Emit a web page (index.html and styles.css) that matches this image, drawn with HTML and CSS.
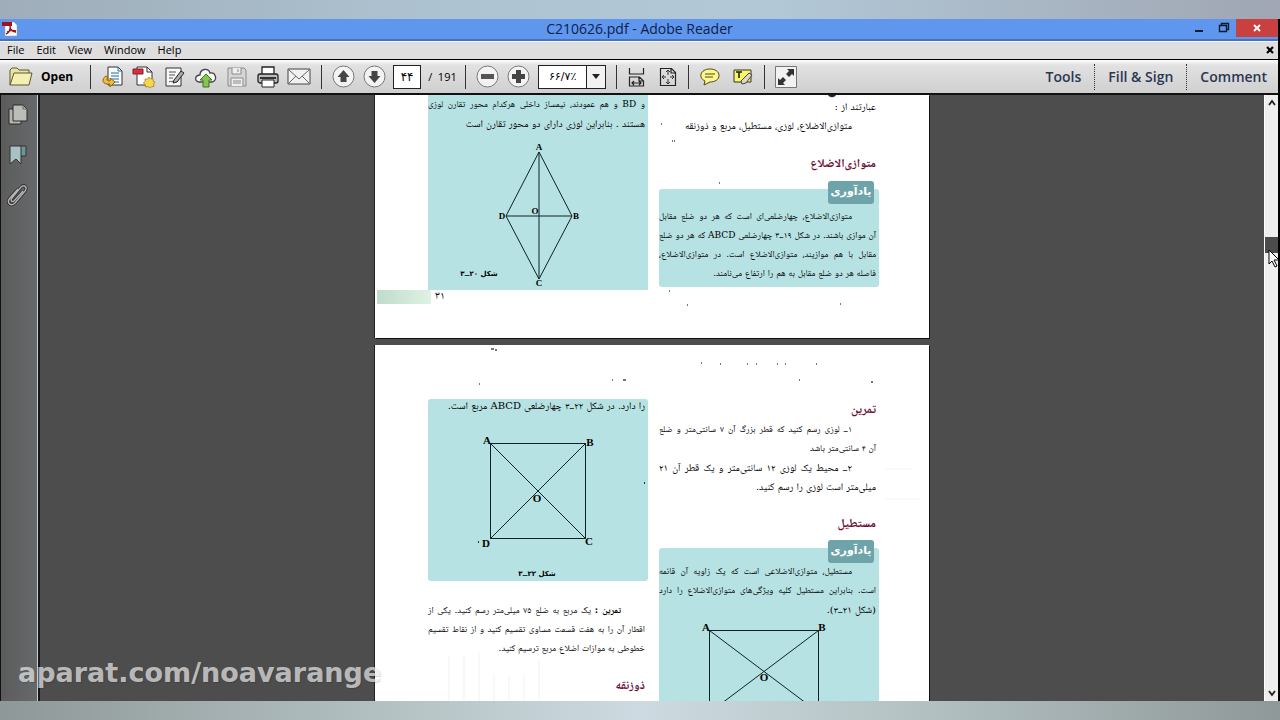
FILE: index.html
```
<!DOCTYPE html>
<html lang="en">
<head>
<meta charset="utf-8">
<title>C210626.pdf - Adobe Reader</title>
<link rel="stylesheet" href="styles.css">
</head>
<body>
<div class="band band-top"></div>
<div class="window">
  <header class="titlebar">
    <svg class="app-icon" width="16" height="16" viewBox="0 0 16 16"><path d="M3 1h9l3 3v11H3z" fill="#fff" stroke="#999" stroke-width=".5"/><path d="M0 1h10v4H0z" fill="#a3131b"/><path d="M8 4c1 4-1 8-4 9M8 5c0 4 3 6 6 6M5 11c3-2 6-2 9-1" fill="none" stroke="#9c1018" stroke-width="1.4"/></svg>
    <h1 class="title">C210626.pdf - Adobe Reader</h1>
    <div class="controls">
      <button class="ctl" aria-label="Minimize"><svg width="10" height="12"><path d="M1 8h8v2H1z" fill="#0c1a30"/></svg></button>
      <button class="ctl" aria-label="Restore"><svg width="12" height="12"><path d="M3.500 3V1.500h7v6H9M1.500 3.500h7v6h-7z" fill="none" stroke="#0c1a30" stroke-width="1.400"/></svg></button>
      <button class="ctl close" aria-label="Close"><svg width="10" height="10"><path d="M2 2l6 6M8 2L2 8" stroke="#fff" stroke-width="1.800"/></svg></button>
    </div>
  </header>
  <nav class="menubar">
    <button>File</button><button>Edit</button><button>View</button><button>Window</button><button>Help</button>
    <button class="doc-close" aria-label="Close document"><svg width="8" height="8"><path d="M1 1l6 6M7 1L1 7" stroke="#000" stroke-width="2.200"/></svg></button>
  </nav>
  <div class="toolbar">
    <button class="open"><svg width="24" height="22" viewBox="0 0 24 22"><path d="M1 19V4l2-2h5l2 2h10v3" fill="#e9e4a4" stroke="#5c5830"/><path d="M1 19L5 7h18l-3 12z" fill="#f4efb2" stroke="#5c5830"/></svg><span>Open</span></button>
    <i class="sep"></i>
    <div class="group files">
      <button aria-label="Export"><svg width="24" height="24"><path d="M7 2h10l4 4v14H7z" fill="#f8fbff" stroke="#333"/><path d="M17 2v4h4M10 8h8M10 11h8M10 14h8M12 17h6" fill="none" stroke="#2b6b9c"/><path d="M5 11c-5 3-4 9 4 8v3l5-5-5-4v3c-3 0-4-2-2-4z" fill="#f3bd35" stroke="#8a6414"/></svg></button>
      <button aria-label="Create PDF"><svg width="24" height="24"><path d="M5 2h10l5 5v13H5z" fill="#fff" stroke="#333"/><path d="M15 2v5h5" fill="none" stroke="#333"/><path d="M1 4h10v5H1z" fill="#d92f3f" stroke="#8c1a26"/><path d="M17 12l1.500 2 2.500-.5v2.500l2 1-1.500 2 .5 2.500-2.500.2L18 23l-2-1.500-2.500.5-.2-2.500-2-1.500 1.800-1.700L13 14l2.500.2z" fill="#f7d64b" stroke="#9c7a14" stroke-width=".7"/></svg></button>
      <button aria-label="Edit"><svg width="24" height="24"><path d="M3 3h15v18H3z" fill="#f8f8f8" stroke="#333"/><path d="M6 7h7M6 10h6M6 13h4M6 17c2-2 2 1 4-1" fill="none" stroke="#555"/><path d="M11 15L18 6l3 2-7 9-4 1z" fill="#aaa" stroke="#222"/></svg></button>
      <button aria-label="Upload"><svg width="24" height="24"><path d="M5 17c-5-1-4-7 1-7 0-6 8-8 10-2 6-1 8 8 2 9z" fill="#f8f8f8" stroke="#444" stroke-width="1.300"/><path d="M12 9l6 6h-3v7H9v-7H6z" fill="#87c653" stroke="#3f7520"/></svg></button>
      <button aria-label="Save"><svg width="24" height="24"><path d="M3 3h16l2 2v16H3z" fill="#d5d5d5" stroke="#8b8b8b"/><path d="M7 3v6h9V3M6 21v-8h12v8M8 16h8M8 18h8M13 4v3" fill="#eee" stroke="#8b8b8b"/></svg></button>
      <button aria-label="Print"><svg width="24" height="24"><path d="M6 10V2h12v8" fill="#fff" stroke="#222" stroke-width="1.300"/><rect x="2" y="9" width="20" height="9" rx="2" fill="#bbb" stroke="#222" stroke-width="1.300"/><path d="M4 13h16" stroke="#333" stroke-width="2"/><path d="M6 15h12v7H6z" fill="#fff" stroke="#222"/></svg></button>
      <button aria-label="Mail"><svg width="24" height="24"><path d="M1 4h22v15H1z" fill="#f1f1f1" stroke="#444"/><path d="M2 5l10 9L22 5M2 18l7-7M22 18l-7-7" fill="none" stroke="#666"/></svg></button>
    </div>
    <i class="sep"></i>
    <button aria-label="Previous page"><svg width="23" height="23"><circle cx="11.500" cy="11.500" r="10.500" fill="#f3f3f3" stroke="#777"/><path d="M11.500 5l6 7h-3v5h-6v-5h-3z" fill="#444"/></svg></button>
    <button class="down" aria-label="Next page"><svg width="23" height="23"><circle cx="11.500" cy="11.500" r="10.500" fill="#f3f3f3" stroke="#777"/><path d="M11.500 18l6-7h-3V6h-6v5h-3z" fill="#444"/></svg></button>
    <input class="page-no" aria-label="Page" value="۴۴">
    <span class="total">/&nbsp; 191</span>
    <i class="sep"></i>
    <button aria-label="Zoom out"><svg width="23" height="23"><circle cx="11.500" cy="11.500" r="10.500" fill="#f3f3f3" stroke="#777"/><path d="M5 9h13v5H5z" fill="#555"/></svg></button>
    <button class="down" aria-label="Zoom in"><svg width="23" height="23"><circle cx="11.500" cy="11.500" r="10.500" fill="#f3f3f3" stroke="#777"/><path d="M9 5h5v4h4v5h-4v4H9v-4H5V9h4z" fill="#444"/></svg></button>
    <div class="zoom"><input aria-label="Zoom level" value="۶۶/۷٪"><button aria-label="Zoom levels"><svg width="8" height="5"><path d="M0 0h8L4 5z" fill="#222"/></svg></button></div>
    <i class="sep"></i>
    <button class="fit" aria-label="Fit width"><svg width="20" height="22"><path d="M2.500 2v6h14V2M2.500 20v-9h10l4 4v5zM12 11v4h4M5 17h9M7 15l-2 2 2 2M12 15l2 2-2 2" fill="none" stroke="#222" stroke-width="1.200"/></svg></button>
    <button class="fit" aria-label="Fit page"><svg width="20" height="22"><path d="M2.500 2.500h11l4 4v13h-15zM13 3v4h4" fill="none" stroke="#222" stroke-width="1.200"/><path d="M10 4v5M10 13v5M4 11h4M12 11h4M8 6l2-2 2 2M8 16l2 2 2-2M6 9l-2 2 2 2M14 9l2 2-2 2" fill="none" stroke="#333"/></svg></button>
    <i class="sep"></i>
    <button class="fit" aria-label="Add note"><svg width="22" height="20"><path d="M11 2c5 0 9 2.500 9 6.500S16 15 11 15l-6 3 1-4C-1 11 1 2 11 2z" fill="#fbf78a" stroke="#4c4820"/><path d="M6 7h10M6 10h8" stroke="#4c4820"/></svg></button>
    <button class="fit" aria-label="Highlight text"><svg width="22" height="20"><path d="M2 3h17v12H2z" fill="#fbf760" stroke="#333"/><path d="M4 5h6M7 5v6" stroke="#222" stroke-width="1.600"/><path d="M9 14l8-8 3 2-6 8-4 1z" fill="#d8d8c8" stroke="#444"/></svg></button>
    <i class="sep"></i>
    <button aria-label="Read mode"><svg width="22" height="22"><path d="M.5.500h21v21H.5z" fill="#f2f2f2" stroke="#777"/><path d="M12 3h7v7l-2-2-3 3-3-3 3-3zM10 19H3v-7l2 2 3-3 3 3-3 3z" fill="#333"/></svg></button>
    <div class="panes"><button>Tools</button><button>Fill &amp; Sign</button><button>Comment</button></div>
  </div>
  <main class="work">
    <aside class="side">
      <button aria-label="Pages"><svg width="22" height="24"><path d="M2 6h12v15H2z" fill="#b6b6b0" stroke="#2a2a2a"/><path d="M6 2h10l4 4v12H6z" fill="#bcbcb8" stroke="#2a2a2a"/><path d="M16 2v4h4" fill="none" stroke="#666"/></svg></button>
      <button aria-label="Bookmarks"><svg width="22" height="24"><path d="M12 3h7v10h-6z" fill="#6f9498" stroke="#333"/><path d="M3 3h11v18l-5-5-6 5z" fill="#a8c2c4" stroke="#333"/></svg></button>
      <button aria-label="Attachments"><svg width="22" height="24"><path d="M16 8l-9 10c-2 2-4-1-2-3L14 4c3-3 7 0 4 4L8 20c-4 4-9 0-5-5l8-9" fill="none" stroke="#292929" stroke-width="3"/><path d="M16 8l-9 10c-2 2-4-1-2-3L14 4c3-3 7 0 4 4L8 20c-4 4-9 0-5-5l8-9" fill="none" stroke="#b5b5b5" stroke-width="1.400"/></svg></button>
    </aside>
    <div class="document" lang="fa">
      <article class="page first">
        <section class="col">
          <div class="box open-top">
            <p class="full">و BD و هم عمودند، نیمساز داخلی هرکدام محور تقارن لوزی</p>
            <p class="large">هستند . بنابراین لوزی دارای دو محور تقارن است</p>
            <svg class="fig" width="219" height="154" viewBox="0 0 219 154"><path d="M111 16L144 80L111 143L78 80ZM111 16V143M78 80H144" class="ln"/><g class="lbl"><text x="111" y="14">A</text><text x="148" y="83">B</text><text x="111" y="150">C</text><text x="74" y="83">D</text><text x="107" y="78">O</text></g><text x="51" y="140" class="cap">شکل ۲۰ــ۳</text></svg>
          </div>
          <footer class="folio"><i></i><span>۳۱</span></footer>
        </section>
        <section class="col right">
          <p class="large">عبارتند از :</p>
          <p class="indent large">متوازی‌الاضلاع، لوزی، مستطیل، مربع و ذوزنقه</p>
          <h2>متوازی‌الاضلاع</h2>
          <div class="box note">
            <strong class="badge">یادآوری</strong>
            <p class="indent full">متوازی‌الاضلاع، چهارضلعی‌ای است که هر دو ضلع مقابل</p>
            <p class="full">آن موازی باشند. در شکل ۱۹ــ۳ چهارضلعی ABCD که هر دو ضلع</p>
            <p class="full">مقابل با هم موازیند، متوازی‌الاضلاع است. در متوازی‌الاضلاع،</p>
            <p>فاصله هر دو ضلع مقابل به هم را ارتفاع می‌نامند.</p>
          </div>
        </section>
        <svg class="specks" width="554" height="243"><path d="M286 29h1M297 46h1M299 46h1M344 88h1M294 196h1M312 210h1M465 209h1" stroke="#777" stroke-width="2"/><path d="M453 0c2 3 6 3 8 0z" fill="#222"/></svg>
      </article>
      <article class="page second">
        <section class="col">
          <div class="box square">
            <p class="end large">را دارد. در شکل ۲۲ــ۳ چهارضلعی ABCD مربع است.</p>
            <svg class="fig" width="219" height="166" viewBox="0 0 219 166"><path d="M62.500 25.500H157.500V120.500H62.500ZM62.500 25.500L157.500 120.500M157.500 25.500L62.500 120.500" class="ln"/><g class="lbl big"><text x="59" y="26">A</text><text x="162" y="28">B</text><text x="161" y="127">C</text><text x="58" y="129">D</text><text x="109" y="84">O</text></g><text x="109" y="158" class="cap">شکل ۲۲ــ۳</text></svg>
          </div>
          <div class="exercise">
            <p class="indent full"><b>تمرین :</b> یک مربع به ضلع ۷۵ میلی‌متر رسم کنید. یکی از</p>
            <p class="full">اقطار آن را به هفت قسمت مساوی تقسیم کنید و از نقاط تقسیم</p>
            <p>خطوطی به موازات اضلاع مربع ترسیم کنید.</p>
          </div>
          <h2>ذوزنقه</h2>
        </section>
        <section class="col right">
          <h2>تمرین</h2>
          <p class="indent full">۱ــ لوزی رسم کنید که قطر بزرگ آن ۷ سانتی‌متر و ضلع</p>
          <p>آن ۴ سانتی‌متر باشد</p>
          <p class="indent full large">۲ــ محیط یک لوزی ۱۲ سانتی‌متر و یک قطر آن ۲۱</p>
          <p class="large">میلی‌متر است لوزی را رسم کنید.</p>
          <h2>مستطیل</h2>
          <div class="box note">
            <strong class="badge">یادآوری</strong>
            <p class="indent full">مستطیل، متوازی‌الاضلاعی است که یک زاویه آن قائمه</p>
            <p class="full">است. بنابراین مستطیل کلیه ویژگی‌های متوازی‌الاضلاع را دارد</p>
            <p class="large">(شکل ۲۱ــ۳).</p>
            <svg class="fig" width="219" height="120" viewBox="0 0 219 120"><path d="M50.500 11.500H159.500V93.500H50.500ZM50.500 11.500L159.500 93.500M159.500 11.500L50.500 93.500" class="ln"/><g class="lbl big"><text x="47" y="12">A</text><text x="163" y="12">B</text><text x="105" y="62">O</text></g></svg>
          </div>
        </section>
        <svg class="specks" width="554" height="356"><path d="M116 4h3M120 5h2M104 39h1M237 35h1M248 35h3M345 19h1M372 19h1M381 19h1M410 19h1M441 19h1M402 19h1M424 35h1M496 37h2M326 18h1" stroke="#777" stroke-width="2"/><path d="M74 310v46M89 310v46M104 308v48M119 330v26M134 330v26M149 330v26M164 315v41" stroke="#eef4f6"/><path d="M510 124h28M510 154h35" stroke="#edf7f7"/><path d="M103 197h1M269 138h1" stroke="#333" stroke-width="2"/></svg>
      </article>
    </div>
    <div class="scroll">
      <svg width="13" height="16"><path d="M4 10l3-4 3 4" fill="none" stroke="#222" stroke-width="1.800"/></svg>
      <i class="thumb"></i>
      <svg class="arrow-end" width="13" height="16"><path d="M4 6l3 4 3-4" fill="none" stroke="#222" stroke-width="1.800"/></svg>
    </div>
    <span class="watermark">aparat.com/noavarange</span>
    <svg class="cursor" width="12" height="19"><path d="M1 1v14l3-3 3 6 2-1-3-6h5z" fill="#fff" stroke="#000"/></svg>
  </main>
</div>
<div class="band band-bottom"></div>
</body>
</html>
```
FILE: styles.css
```
* { box-sizing: border-box; }
body { margin: 0; height: 100vh; display: flex; flex-direction: column; overflow: hidden; font-family: "Open Sans", "Noto Sans", sans-serif; background: #000; color: #000; }
button { padding: 0; border: 0; background: none; font: inherit; color: inherit; display: flex; align-items: center; justify-content: center; }
svg { display: block; flex: none; }
p, h1, h2 { margin: 0; }
.band { flex: none; height: 19px; }
.band-top { background: linear-gradient(90deg, #9eadb9, #aec3d2 35%, #b2c8d7 60%, #a0a6b3); }
.band-bottom { background: linear-gradient(90deg, #8f9899, #b3c1c2 30%, #cddae1 50%, #b3c1c2 72%, #8f9899); }
.window { flex: 1; min-height: 0; display: flex; flex-direction: column; margin-right: 2px; }
.titlebar { flex: none; height: 22px; display: flex; align-items: center; background: #6097ee; border-bottom: 2px solid #4673bc; }
.app-icon { margin-left: 2px; }
.title { flex: 1; text-align: center; font-size: 14px; font-weight: 400; color: #0d2149; line-height: 20px; padding-left: 75px; }
.controls { display: flex; align-self: flex-start; }
.ctl { width: 25px; height: 18px; }
.ctl.close { width: 42px; background: #c94040; }
.menubar { flex: none; height: 19px; display: flex; align-items: center; gap: 12px; padding: 0 4px 2px 7px; background: #dedede; border-top: 1px solid #f4f4f4; border-bottom: 1px solid #000; font-size: 11px; font-weight: 500; line-height: 16px; }
.doc-close { margin-left: auto; }
.toolbar { flex: none; height: 35px; display: flex; align-items: center; padding: 0 11px 0 9px; background: linear-gradient(#fff, #e2e2e2 15%, #cfcfcf); border-bottom: 2px solid #111; font-size: 12px; }
.open { gap: 8px; font-weight: 700; }
.sep { width: 1px; height: 24px; background: #333; margin: 0 10px; flex: none; }
.open + .sep { margin: 0 10px 0 17px; }
.files { display: flex; gap: 7px; }
.down { margin-left: 8px; }
.page-no { width: 28px; height: 24px; margin-left: 7px; padding: 0; border: 1px solid #222; background: #fff; font: 12px "DejaVu Sans", sans-serif; text-align: center; }
.total { margin-left: 7px; width: 27px; white-space: nowrap; font-size: 11px; }
.zoom { display: flex; margin-left: 8px; width: 68px; height: 24px; border: 1px solid #222; background: #fff; }
.zoom input { width: 47px; border: 0; padding: 0; background: none; text-align: center; font: 11px "DejaVu Sans", sans-serif; }
.zoom button { flex: 1; border-left: 1px solid #222; background: #f2f2f2; }
.fit + .fit { margin-left: 11px; }
.panes { margin-left: auto; display: flex; font-size: 14px; font-weight: 600; color: #2a3852; }
.panes button { height: 26px; padding: 0 13px; }
.panes button + button { border-left: 1px dotted #333; }
.panes button:last-child { padding-right: 0; }
.work { flex: 1; min-height: 0; display: flex; position: relative; background: #4d4d4d; }
.side { width: 40px; flex: none; display: flex; flex-direction: column; gap: 16px; padding: 8px 3px 0 0; background: linear-gradient(90deg, #5c5c5c, #66696b); border-left: 1px solid #111; border-right: 2px solid #181818; box-shadow: inset -1px 0 #ccc; }
.document { flex: 1; overflow: hidden; display: flex; flex-direction: column; align-items: center; gap: 7px; font-family: "DejaVu Serif", "Noto Naskh Arabic", "DejaVu Sans", serif; font-size: 9px; direction: ltr; }
.page { flex: none; width: 554px; display: grid; grid-template-columns: 220px 220px; column-gap: 11px; padding: 0 50px 0 53px; background: #fff; box-shadow: 1px 1px #111, -1px 0 #222; position: relative; align-items: start; }
.first { height: 243px; }
.second { min-height: 400px; }
.page p { direction: rtl; line-height: 19px; height: 19px; white-space: nowrap; padding: 0 3px 0 0; }
.page .full { text-align-last: justify; }
.page .indent { padding-right: 27px; }
.page .end { line-height: 13px; }
.page .large { font-size: 10px; }
.page h2 { direction: rtl; color: #690d33; font-size: 12px; line-height: 22px; padding-right: 3px; }
.box { background: #b7e2e3; border-radius: 3px; position: relative; }
.open-top { height: 195px; border-radius: 0; }
.fig { direction: ltr; overflow: visible; }
.open-top .fig { margin-top: 3px; }
.ln { fill: none; stroke: #0d2226; stroke-width: 1; }
.lbl { font: 700 9px "Liberation Serif", serif; text-anchor: middle; }
.big { font-size: 11px; }
.cap { font: 700 7px "DejaVu Sans", sans-serif; text-anchor: middle; direction: rtl; }
.folio { display: flex; align-items: center; margin-left: -51px; height: 14px; font-size: 11px; }
.folio i { width: 54px; height: 14px; background: linear-gradient(90deg, #bfdccb, #dff2e4); }
.folio span { padding-left: 4px; line-height: 12px; align-self: flex-start; }
.first .right { padding-top: 2px; }
.first h2 { padding-top: 17px; line-height: 22px; }
.first .note { margin-top: 15px; padding: 18px 0 4px; height: 98px; }
.badge { position: absolute; top: -8px; right: 5px; width: 46px; height: 23px; line-height: 22px; border-radius: 3px; background: #6ea4a9; color: #fff; font-family: "DejaVu Sans", sans-serif; font-size: 11px; text-align: center; }
.second .col:first-child { padding-top: 54px; }
.square { height: 182px; }
.exercise { padding-top: 20px; }
.exercise + h2 { padding-top: 16px; }
.second .right { padding-top: 53px; }
.second .right p + h2 { padding-top: 16px; }
.second .note { margin-top: 14px; padding-top: 14px; }
.specks { position: absolute; left: 0; top: 0; }
.scroll { width: 14px; flex: none; background: #eee; border-left: 1px solid #fff; display: flex; flex-direction: column; }
.thumb { height: 16px; margin-top: 126px; background: #4c4c4c; }
.arrow-end { margin-top: auto; }
.watermark { position: absolute; left: 18px; bottom: 8px; font: 700 27px/40px "DejaVu Sans", sans-serif; color: rgba(255, 255, 255, .65); text-shadow: 1px 1px 1px rgba(0, 0, 0, .15); }
.cursor { position: absolute; right: -2px; top: 154px; }
```
